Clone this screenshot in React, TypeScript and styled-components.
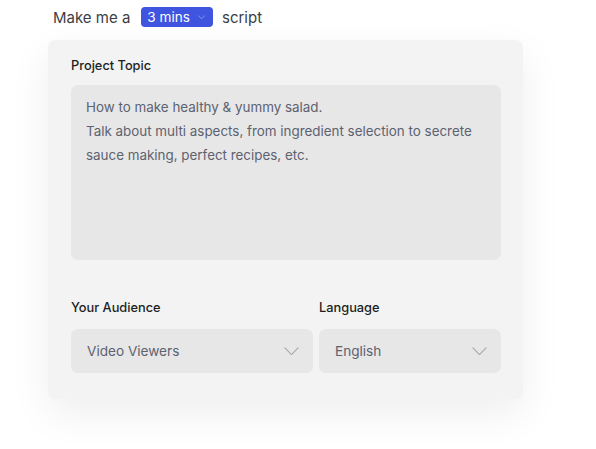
import React from "react";
import styled, { createGlobalStyle } from "styled-components";

const GlobalStyle = createGlobalStyle`
  body {
    margin: 0;
    background: #ffffff;
    font-family: Inter, "Noto Sans", sans-serif;
  }
`;

const Page = styled.div`
  width: 596px;
  height: 449px;
  padding: 7px 0 0 48px;
  box-sizing: border-box;
  overflow: hidden;
`;

const Prompt = styled.div`
  display: flex;
  align-items: center;
  height: 20px;
  padding-left: 5px;
  font-size: 15px;
  color: #3a3d45;
`;

const Pill = styled.div`
  display: flex;
  align-items: center;
  gap: 8px;
  height: 20px;
  margin: 0 9px 0 11px;
  padding: 0 8px 0 6px;
  border-radius: 4px;
  background: #3f55e0;
  color: #ffffff;
  font-size: 13.6px;
`;

const Card = styled.div`
  margin-top: 13px;
  width: 475px;
  box-sizing: border-box;
  padding: 18px 22px 26px 23px;
  background: #f3f3f3;
  border-radius: 7px;
  box-shadow: 0 14px 40px rgba(0, 0, 0, 0.07);
`;

const Label = styled.div`
  font-size: 12.8px;
  font-weight: 500;
  color: #1d1e22;
  line-height: 16px;
  margin-bottom: 11px;
`;

const FieldLabel = styled(Label)`
  margin-bottom: 13px;
`;

const TextBox = styled.div`
  height: 175px;
  box-sizing: border-box;
  padding: 10px 15px;
  background: #e7e7e7;
  border-radius: 7px;
  font-size: 13.4px;
  line-height: 24px;
  color: #5d6270;
`;

const Row = styled.div`
  display: flex;
  gap: 6px;
  margin-top: 40px;
`;

const Field = styled.div<{ $w: number }>`
  width: ${({ $w }) => $w}px;
`;

const Select = styled.div`
  display: flex;
  align-items: center;
  justify-content: space-between;
  height: 44px;
  padding: 0 14px 0 16px;
  background: #e7e7e7;
  border-radius: 7px;
  font-size: 13.6px;
  color: #5d6270;
`;

const Chevron = ({ size, color }: { size: number; color: string }) => (
  <svg width={size} height={size / 2 + 1} viewBox="0 0 16 9" fill="none">
    <path d="M1 1l7 7 7-7" stroke={color} strokeWidth="1.2" strokeLinecap="round" strokeLinejoin="round" />
  </svg>
);

export default function App() {
  return (
    <Page>
      <GlobalStyle />
      <Prompt>
        <span>Make me a</span>
        <Pill>
          <span>3 mins</span>
          <Chevron size={7} color="#c8cdf8" />
        </Pill>
        <span>script</span>
      </Prompt>
      <Card>
        <Label>Project Topic</Label>
        <TextBox>
          How to make healthy &amp; yummy salad.
          <br />
          Talk about multi aspects, from ingredient selection to secrete sauce making, perfect recipes, etc.
        </TextBox>
        <Row>
          <Field $w={242}>
            <FieldLabel>Your Audience</FieldLabel>
            <Select>
              <span>Video Viewers</span>
              <Chevron size={15} color="#a3a7b0" />
            </Select>
          </Field>
          <Field $w={182}>
            <FieldLabel>Language</FieldLabel>
            <Select>
              <span>English</span>
              <Chevron size={15} color="#a3a7b0" />
            </Select>
          </Field>
        </Row>
      </Card>
    </Page>
  );
}
